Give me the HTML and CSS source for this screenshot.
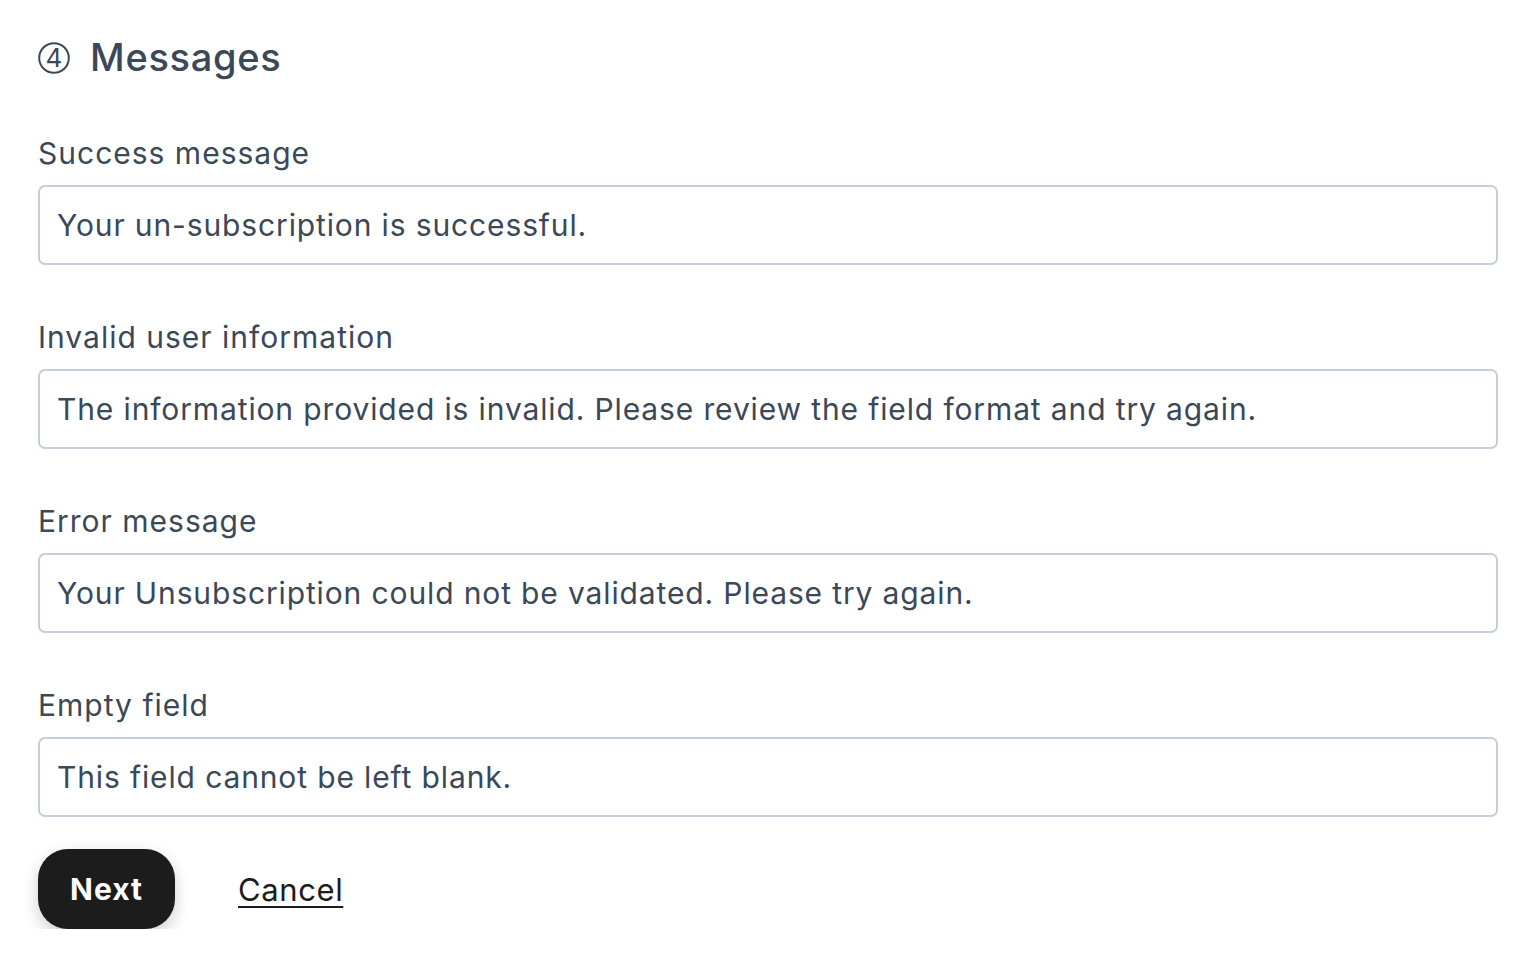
FILE: index.html
```html
<!DOCTYPE html>
<html lang="en">
<head>
<meta charset="utf-8">
<title>Messages</title>
<link rel="stylesheet" href="styles.css">
</head>
<body>
<main class="page">
  <h1 class="title">
    <span class="step">
      <svg viewBox="0 0 32 32" width="32" height="32" aria-hidden="true">
        <circle cx="16" cy="16" r="14.8" fill="none" stroke="#3a4858" stroke-width="2"/>
      </svg>
      <span class="step-num">4</span>
    </span>
    <span>Messages</span>
  </h1>

  <div class="field">
    <label class="label" for="f1">Success message</label>
    <input class="input" id="f1" type="text" value="Your un-subscription is successful.">
  </div>
  <div class="field">
    <label class="label" for="f2">Invalid user information</label>
    <input class="input" id="f2" type="text" value="The information provided is invalid. Please review the field format and try again.">
  </div>
  <div class="field">
    <label class="label" for="f3">Error message</label>
    <input class="input" id="f3" type="text" value="Your Unsubscription could not be validated. Please try again.">
  </div>
  <div class="field">
    <label class="label" for="f4">Empty field</label>
    <input class="input" id="f4" type="text" value="This field cannot be left blank.">
  </div>

  <div class="actions">
    <button class="btn-next" type="button">Next</button>
    <a class="link-cancel" href="#">Cancel</a>
  </div>
</main>
</body>
</html>
```

FILE: styles.css
```css
* { box-sizing: border-box; }
html, body { margin: 0; padding: 0; background: #ffffff; }
body {
  font-family: Inter, "Noto Sans", "Liberation Sans", sans-serif;
  color: #3a4858;
}
.page {
  padding: 28px 30px 0 38px;
  display: flex;
  flex-direction: column;
}
.title {
  margin: 0 0 50px 0;
  display: flex;
  align-items: center;
  gap: 20px;
  font-size: 38px;
  font-weight: 500;
  line-height: 58px;
  letter-spacing: 0.7px;
  color: #3a4858;
}
.step {
  position: relative;
  width: 32px;
  height: 32px;
  margin-top: 2px;
  display: inline-flex;
  align-items: center;
  justify-content: center;
}
.step svg { position: absolute; left: 0; top: 0; }
.step-num {
  position: relative;
  font-size: 26px;
  font-weight: 400;
  line-height: 1;
  letter-spacing: 0;
}
.field {
  display: flex;
  flex-direction: column;
  gap: 15px;
  margin-bottom: 55px;
}
.label {
  font-size: 30px;
  line-height: 34px;
  font-weight: 400;
  letter-spacing: 1px;
  color: #3a4858;
}
.input {
  width: 100%;
  height: 80px;
  border: 2px solid #c3cfdc;
  border-radius: 7px;
  padding: 0 17px;
  font-family: inherit;
  font-size: 30px;
  letter-spacing: 0.87px;
  color: #3a4858;
  background: #fff;
  outline: none;
}
.actions {
  margin-top: -23px;
  display: flex;
  align-items: center;
  gap: 63px;
}
.btn-next {
  width: 137px;
  height: 80px;
  border: none;
  border-radius: 30px;
  background: #1c1c1c;
  color: #fff;
  font-family: inherit;
  font-size: 30px;
  font-weight: 700;
  letter-spacing: 1px;
  box-shadow: 0 6px 16px rgba(0,0,0,0.2);
}
.link-cancel {
  font-size: 31px;
  color: #1c1c1c;
  letter-spacing: 0.6px;
  text-decoration: underline;
  text-underline-offset: 5px;
  text-decoration-thickness: 2px;
}
```
